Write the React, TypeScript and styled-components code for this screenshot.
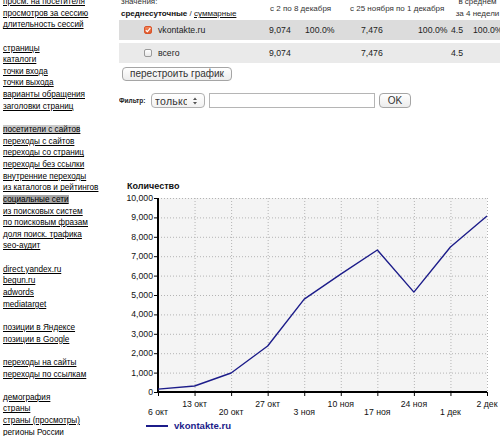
import styled, {createGlobalStyle} from "styled-components";

const GlobalStyle = createGlobalStyle`
  html, body {
    margin: 0;
    padding: 0;
    background: #fff;
    overflow: hidden;
  }
  body {
    font-family: "Liberation Sans", Arial, sans-serif;
    color: #222;
  }
`;

const Page = styled.div`
  display: flex;
  margin-top: -4px;
  width: 500px;
`;

const Sidebar = styled.div`
  width: 116px;
  padding-left: 3px;
  flex-shrink: 0;
  font-size: 8.2px;
`;

const NavGroup = styled.div`
  margin-bottom: 11.65px;
`;

const NavItem = styled.div`
  line-height: 11.65px;
  height: 11.65px;
  white-space: nowrap;
`;

const NavLink = styled.a<{ $mark?: "light" | "dark" }>`
  color: #000;
  text-decoration: underline;
  background: ${p => p.$mark === "dark" ? "#a6a6a6" : p.$mark === "light" ? "#c9c9c9" : "transparent"};
  cursor: pointer;
`;

const Main = styled.div`
  flex: 1;
  min-width: 0;
  overflow: hidden;
`;

const TableHead = styled.div`
  display: grid;
  grid-template-columns: 151px 80px 105px 1fr;
  height: 24px;
  align-items: center;
  font-size: 8px;
  color: #333;
  white-space: nowrap;
`;

const HeadLabel = styled.div`
  padding-left: 2px;
  line-height: 11.6px;
`;

const HeadCenter = styled.div`
  text-align: center;
  line-height: 12px;
`;

const Strong = styled.b`
  color: #111;
`;

const SwitchLink = styled.a`
  color: #111;
  text-decoration: underline;
`;

const DataRow = styled.div<{ $tone: "dark" | "light" }>`
  display: grid;
  grid-template-columns: 39px 111px 36px 56px 57px 33px 22px 40px;
  align-items: center;
  height: 20px;
  margin-bottom: 3px;
  background: ${p => p.$tone === "dark" ? "#dcdcdc" : "#eaeaea"};
  font-size: 8.7px;
  color: #222;
  white-space: nowrap;
`;

const Cell = styled.div<{ $right?: boolean }>`
  text-align: ${p => p.$right ? "right" : "left"};
  padding-right: ${p => p.$right ? "6px" : "0"};
`;

const CheckCell = styled.div`
  padding-left: 25px;
  display: flex;
  align-items: center;
`;

const Check = styled.span<{ $on?: boolean }>`
  display: inline-flex;
  align-items: center;
  justify-content: center;
  width: 8px;
  height: 8px;
  border-radius: 2px;
  box-sizing: border-box;
  border: 1px solid ${p => p.$on ? "#d9542b" : "#9a9a9a"};
  background: ${p => p.$on ? "linear-gradient(#f2875a, #de5a2c)" : "linear-gradient(#fff, #e8e8e8)"};
`;

const RebuildButton = styled.button`
  display: block;
  margin: 4px 0 0 3px;
  height: 14px;
  width: 110px;
  padding: 0;
  border: 1px solid #a5a5a5;
  border-radius: 4px;
  background: linear-gradient(#ffffff, #ececec);
  font-family: "Liberation Sans", Arial, sans-serif;
  font-size: 10px;
  line-height: 12px;
  color: #333;
`;

const FilterRow = styled.div`
  display: flex;
  align-items: center;
  gap: 4px;
  margin-top: 12px;
  height: 15px;
`;

const FilterLabel = styled.span`
  font-size: 6.5px;
  font-weight: bold;
  color: #222;
  width: 28px;
`;

const SelectBox = styled.div`
  width: 54px;
  height: 15px;
  box-sizing: border-box;
  border: 1px solid #b0b0b0;
  border-radius: 4px;
  background: linear-gradient(#fff, #f2f2f2);
  display: flex;
  align-items: center;
  padding-left: 3px;
  gap: 5px;
  font-size: 10.5px;
  color: #333;
  overflow: hidden;
`;

const SelectText = styled.span`
  width: 32px;
  overflow: hidden;
  white-space: nowrap;
  letter-spacing: 0.3px;
`;

const TextInput = styled.div`
  width: 166px;
  height: 15px;
  box-sizing: border-box;
  border: 1px solid #b5b5b5;
  background: #fff;
`;

const OkButton = styled.button`
  width: 32px;
  height: 15px;
  padding: 0;
  border: 1px solid #a5a5a5;
  border-radius: 4px;
  background: linear-gradient(#ffffff, #ececec);
  font-family: "Liberation Sans", Arial, sans-serif;
  font-size: 10px;
  color: #333;
`;

const ChartBlock = styled.div`
  margin-top: 72px;
`;

const ChartTitle = styled.div`
  padding-left: 8px;
  font-size: 9px;
  font-weight: bold;
  color: #111;
  line-height: 12px;
`;

const Legend = styled.div`
  display: flex;
  align-items: center;
  gap: 6px;
  padding-left: 27px;
  margin-top: 2px;
`;

const LegendLine = styled.span`
  width: 22px;
  height: 2px;
  background: #1c1c8a;
`;

const LegendName = styled.span`
  font-size: 9.6px;
  font-weight: bold;
  color: #1c1c8a;
`;

const nav: { label: string; mark?: "light" | "dark" }[][] = [
    [{label: "просм. на посетителя"}, {label: "просмотров за сессию"}, {label: "длительность сессий"}],
    [{label: "страницы"}, {label: "каталоги"}, {label: "точки входа"}, {label: "точки выхода"},
        {label: "варианты обращения"}, {label: "заголовки страниц"}],
    [{label: "посетители с сайтов", mark: "light"}, {label: "переходы с сайтов"}, {label: "переходы со страниц"},
        {label: "переходы без ссылки"}, {label: "внутренние переходы"}, {label: "из каталогов и рейтингов"},
        {label: "социальные сети", mark: "dark"}, {label: "из поисковых систем"}, {label: "по поисковым фразам"},
        {label: "доля поиск. трафика"}, {label: "seo-аудит"}],
    [{label: "direct.yandex.ru"}, {label: "begun.ru"}, {label: "adwords"}, {label: "mediatarget"}],
    [{label: "позиции в Яндексе"}, {label: "позиции в Google"}],
    [{label: "переходы на сайты"}, {label: "переходы по ссылкам"}],
    [{label: "демография"}, {label: "страны"}, {label: "страны (просмотры)"}, {label: "регионы России"}],
];

const weeks = ["6 окт", "13 окт", "20 окт", "27 окт", "3 ноя", "10 ноя", "17 ноя", "24 ноя", "1 дек", "2 дек"];
const values = [150, 310, 980, 2370, 4790, 6080, 7320, 5150, 7476, 9074];

// plot geometry in svg coords
const X0 = 39, X1 = 368, Y0 = 6, Y1 = 200;
const xAt = (i: number) => X0 + (X1 - X0) * i / 9;
const yAt = (v: number) => Y1 - (Y1 - Y0) * v / 10000;

function Chart() {
    const ticks = [0, 1000, 2000, 3000, 4000, 5000, 6000, 7000, 8000, 9000, 10000];
    const points = values.map((v, i) => `${xAt(i)},${yAt(v)}`).join(" ");
    return (
        <svg width="382" height="226" viewBox="0 0 382 226" style={{display: "block"}}>
            <rect x={X0} y={Y0} width={X1 - X0} height={Y1 - Y0} fill="#f4f4f4"/>
            {ticks.slice(1).map(t => (
                <line key={t} x1={X0} x2={X1} y1={yAt(t) + 0.5} y2={yAt(t) + 0.5}
                      stroke="#b4b4b4" strokeDasharray="1 2"/>
            ))}
            {weeks.slice(1).map((w, i) => (
                <line key={w} x1={xAt(i + 1) + 0.5} x2={xAt(i + 1) + 0.5} y1={Y0} y2={Y1}
                      stroke="#b4b4b4" strokeDasharray="1 2"/>
            ))}
            {ticks.map(t => (
                <g key={t}>
                    <line x1={X0 - 4} x2={X0} y1={yAt(t) + 0.5} y2={yAt(t) + 0.5} stroke="#000"/>
                    <text x={X0 - 5} y={yAt(t) + 3} textAnchor="end" fontSize="8.7"
                          fontFamily="Liberation Sans, Arial, sans-serif" fill="#111">
                        {t.toLocaleString("en-US")}
                    </text>
                </g>
            ))}
            {weeks.map((w, i) => (
                <g key={w}>
                    <line x1={xAt(i) + 0.5} x2={xAt(i) + 0.5} y1={Y1} y2={Y1 + 4} stroke="#000"/>
                    <text x={xAt(i)} y={i % 2 ? 215 : 223} textAnchor="middle" fontSize="8.7"
                          fontFamily="Liberation Sans, Arial, sans-serif" fill="#111">{w}</text>
                </g>
            ))}
            <line x1={X0} x2={X0} y1={Y0} y2={Y1 + 1} stroke="#000" strokeWidth="2"/>
            <line x1={X0 - 1} x2={X1} y1={Y1} y2={Y1} stroke="#000" strokeWidth="2"/>
            <polyline points={points} fill="none" stroke="#1c1c8a" strokeWidth="1.4" strokeLinejoin="round"/>
        </svg>
    );
}

export default function App() {
    return (
        <>
            <GlobalStyle/>
            <Page>
                <Sidebar>
                    {nav.map((group, gi) => (
                        <NavGroup key={gi}>
                            {group.map(item => (
                                <NavItem key={item.label}>
                                    <NavLink $mark={item.mark}>{item.label}</NavLink>
                                </NavItem>
                            ))}
                        </NavGroup>
                    ))}
                </Sidebar>
                <Main>
                    <TableHead>
                        <HeadLabel>
                            значения:<br/>
                            <Strong>среднесуточные</Strong> / <SwitchLink>суммарные</SwitchLink>
                        </HeadLabel>
                        <div>с 2 по 8 декабря</div>
                        <div>с 25 ноября по 1 декабря</div>
                        <HeadCenter>в среднем<br/>за 4 недели</HeadCenter>
                    </TableHead>
                    <DataRow $tone="dark">
                        <CheckCell>
                            <Check $on>
                                <svg width="6" height="6" viewBox="0 0 6 6">
                                    <path d="M0.8 3.2 L2.4 4.7 L5.3 1.2" fill="none" stroke="#fff" strokeWidth="1.2"/>
                                </svg>
                            </Check>
                        </CheckCell>
                        <Cell>vkontakte.ru</Cell>
                        <Cell>9,074</Cell>
                        <Cell>100.0%</Cell>
                        <Cell>7,476</Cell>
                        <Cell $right>100.0%</Cell>
                        <Cell>4.5</Cell>
                        <Cell>100.0%</Cell>
                    </DataRow>
                    <DataRow $tone="light">
                        <CheckCell><Check/></CheckCell>
                        <Cell>всего</Cell>
                        <Cell>9,074</Cell>
                        <Cell/>
                        <Cell>7,476</Cell>
                        <Cell/>
                        <Cell>4.5</Cell>
                        <Cell/>
                    </DataRow>
                    <RebuildButton>перестроить график</RebuildButton>
                    <FilterRow>
                        <FilterLabel>Фильтр:</FilterLabel>
                        <SelectBox>
                            <SelectText>только</SelectText>
                            <svg width="6" height="10" viewBox="0 0 6 10">
                                <path d="M1 4 L3 1.5 L5 4 Z M1 6 L3 8.5 L5 6 Z" fill="#555"/>
                            </svg>
                        </SelectBox>
                        <TextInput/>
                        <OkButton>OK</OkButton>
                    </FilterRow>
                    <ChartBlock>
                        <ChartTitle>Количество</ChartTitle>
                        <Chart/>
                        <Legend>
                            <LegendLine/>
                            <LegendName>vkontakte.ru</LegendName>
                        </Legend>
                    </ChartBlock>
                </Main>
            </Page>
        </>
    );
}
